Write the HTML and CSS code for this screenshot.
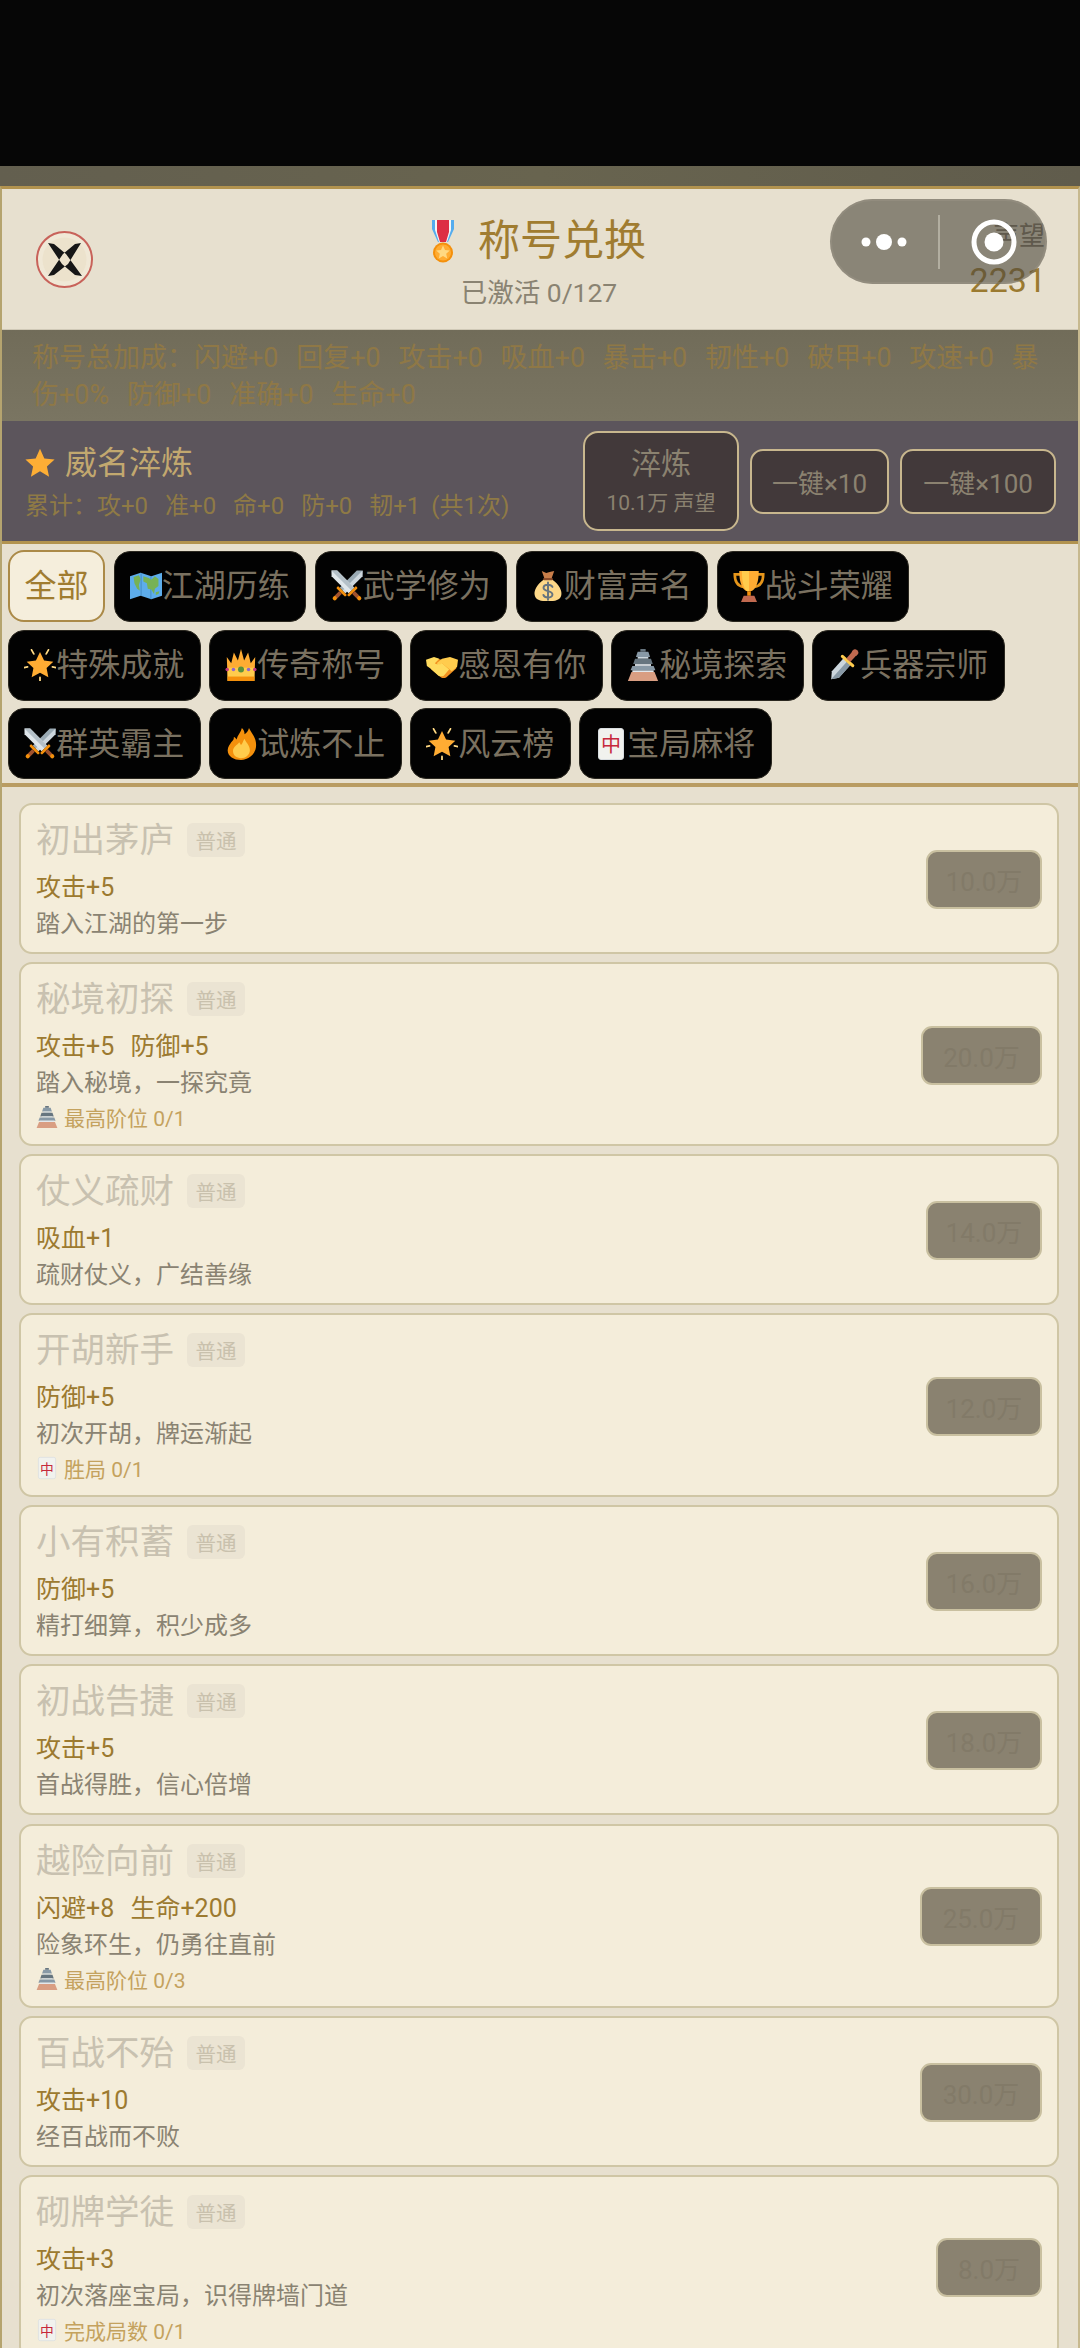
FILE: index.html
```html
<!DOCTYPE html>
<html lang="zh-CN">
<head>
<meta charset="utf-8">
<title>称号兑换</title>
<link rel="stylesheet" href="styles.css">
</head>
<body>
<svg class="defs" width="0" height="0" aria-hidden="true">
  <symbol id="e-star" viewBox="0 0 36 36"><path fill="#fdae35" d="M18 1l5.200 11.600 12.300 1.300-9.200 8.300 2.600 12.300L18 28l-10.900 6.500 2.600-12.300L.5 13.900l12.300-1.300z"/></symbol>
  <symbol id="e-map" viewBox="0 0 36 36"><path fill="#5dadec" d="M0 7l12-4 12 4 12-4v26l-12 4-12-4-12 4z"/><path fill="#4289c1" d="M12 3l1 .3v26.200l-1-.5zM24 7l-1-.3v26.200l1-.4z"/><path fill="#77b255" d="M4 8l6-2 2 4-2 7 1 6-3-2-3-6zM15 7l6 2 3 2 4-4 4 3v8l-4 3-1 6-3-5-4-1-1-6-4-2zM29 25l4-1-1 3-3 1z"/></symbol>
  <symbol id="e-swords" viewBox="0 0 36 36"><g transform="rotate(45 18 18) translate(18 18) scale(1.180) translate(-18 -18)"><path fill="#9aaab4" d="M18-3l3.800 4V24h-7.600V1z"/><path fill="#ccd6dd" d="M18-3l3.800 4V24H18z"/><rect x="12" y="24" width="12" height="2.600" rx="1" fill="#f4900c"/><rect x="16.200" y="26.600" width="3.600" height="7" fill="#a0522d"/><circle cx="18" cy="34.500" r="2" fill="#f4900c"/></g><g transform="rotate(-45 18 18) translate(18 18) scale(1.180) translate(-18 -18)"><path fill="#dfe6ea" d="M18-3l3.800 4V24h-7.600V1z"/><path fill="#b4c0c8" d="M18-3l3.800 4V24H18z"/><rect x="12" y="24" width="12" height="2.600" rx="1" fill="#f4900c"/><rect x="16.200" y="26.600" width="3.600" height="7" fill="#a0522d"/><circle cx="18" cy="34.500" r="2" fill="#f4900c"/></g></symbol>
  <symbol id="e-bag" viewBox="0 0 36 36"><path fill="#fdd888" d="M13 11C6 16 2 23 3 28c1 6 7 7 15 7s14-1 15-7c1-5-3-12-10-17z"/><path fill="#c97e4a" d="M11 1l5 2.500L21 2l4-1-3 8.500h-8z"/><rect x="12.500" y="9" width="11" height="2.600" rx="1.300" fill="#8a4b2a"/><path fill="none" stroke="#67757f" stroke-width="2.200" stroke-linecap="round" d="M23 19c-1-2-3-2.500-5-2.500-3 0-5 1.500-5 3.500 0 5 10 2.500 10 7.500 0 2-2.300 3.500-5 3.500-2.500 0-4.500-1-5.200-3M18 14v19.500"/></symbol>
  <symbol id="e-trophy" viewBox="0 0 36 36"><path fill="none" stroke="#e5951a" stroke-width="3" d="M9 5H2c0 8 3 13 10 14M27 5h7c0 8-3 13-10 14"/><path fill="#ffac33" d="M7 1h22c0 12-3 21-9 23h-4C10 22 7 13 7 1z"/><path fill="#ffcc4d" d="M10 1h8v23h-2C12 21 10 13 10 1z"/><path fill="#f4900c" d="M16 24h4v5h-4z"/><path fill="#c1694f" d="M12 29h12l3 7H9z"/></symbol>
  <symbol id="e-burst" viewBox="0 0 36 36"><path fill="#ffac33" d="M18 3.500l4.600 9.400 10.400 1.400-7.600 7.100 2 10.300L18 26.600l-9.400 5.100 2-10.300L3 14.300l10.400-1.400z"/><path fill="none" stroke="#ffd983" stroke-width="2" stroke-linecap="round" d="M8.500 1l2.500 4.500M27.500 1L25 5.500M0 21l4-.8M36 21l-4-.8M18 32v4"/></symbol>
  <symbol id="e-crown" viewBox="0 0 36 36"><path fill="#ffac33" d="M2 9l5 7 3-12 4.500 9L18 0l3.500 13L26 4l3 12 5-7-1 27H3z"/><path fill="#ffcc4d" d="M3 21h30v15H3z"/><rect x="3" y="31" width="30" height="5" fill="#f4900c"/><circle cx="18" cy="23" r="3.400" fill="#5c913b"/><circle cx="9.500" cy="23" r="2" fill="#9266cc"/><circle cx="26.500" cy="23" r="2" fill="#9266cc"/><circle cx="2.500" cy="23" r="2" fill="#c2397f"/><circle cx="33.500" cy="23" r="2" fill="#c2397f"/></symbol>
  <symbol id="e-shake" viewBox="0 0 36 36"><path fill="#f19020" d="M1 13l8-3 9 2 9-2 8 3-1 9-10 9c-2 2-5 2-7 1L6 23z"/><path fill="#ffdb5e" d="M0 12l9-3 6 2-5 5c2 2 5 1 7-1l9 8-6 7c-2 1-4 1-6 0L5 22 1 19z"/><path fill="#ffcc4d" d="M36 12l-9-3-9 2-6 5c2 2 4 2 6 0l11 9 6-5z"/></symbol>
  <symbol id="e-castle" viewBox="0 0 36 36"><path fill="#67757f" d="M15 0h6v3h-6z"/><path fill="#8899a6" d="M12 3h12l2 6H10z"/><path fill="#ccd6dd" d="M12 9h12v2H12z"/><path fill="#66757f" d="M9 11h18l2 6H7z"/><path fill="#e1e8ed" d="M9 17h18v2H9z"/><path fill="#8899a6" d="M6 19h24l2 5H4z"/><path fill="#e1e8ed" d="M6 24h24v2H6z"/><path fill="#d99e82" d="M5 26h26l4 10H1z"/></symbol>
  <symbol id="e-dagger" viewBox="0 0 36 36"><g transform="rotate(42 18 18) translate(18 18) scale(1.200) translate(-18 -18)"><path fill="#ccd6dd" d="M18 36l-4.500-6V14h9v16z"/><path fill="#8899a6" d="M18 36l4.500-6V14H18z"/><rect x="10" y="11.500" width="16" height="3" rx="1.500" fill="#ffcc4d"/><rect x="15.500" y="3" width="5" height="9" fill="#c1694f"/><circle cx="18" cy="2.500" r="3" fill="#c1694f"/></g></symbol>
  <symbol id="e-fire" viewBox="0 0 36 36"><path fill="#f4900c" d="M35 19C35 10 29 5 27 0c-1 4-3 6-5 7 0-3-1-5-3-7-1 5-5 8-6 13-1-2-2-3-3-3 0 3-1 4-3 6-1 2-4 5-4 9 0 7 7 11 15 11s17-6 17-17z"/><path fill="#ffcc4d" d="M28 25c0-6-5-9-6-13-2 3-2 5-4 7-1-1-1-2-2-3-2 3-7 5-7 10 0 5 4 8 9 8s10-4 10-9z"/></symbol>
</svg>

<div class="top-black"></div>
<div class="top-band"></div>

<main class="panel">
  <header class="head">
    <div class="head-left">
      <svg class="close" viewBox="0 0 57 57" aria-label="关闭"><circle cx="28.500" cy="28.500" r="27.500" fill="#f0e8d6" stroke="#c8625a" stroke-width="2"/><circle cx="28.500" cy="28.500" r="22" fill="#ece2cc"/><path fill="#161616" d="M12 12l6 1 12 10 16 22-7-1-13-11zM45 12l-6 1-12 10-15 22 6-1 14-11z"/></svg>
    </div>
    <div class="head-mid">
      <h1 class="title">
        <svg class="medal" viewBox="0 0 22 43"><path fill="#55acee" d="M0 0h22v9l-6 13H6L0 9z"/><path fill="#f5f5f5" d="M3 0h16v10l-4 12H7L3 10z"/><path fill="#dd2e44" d="M5 0h12v12l-3 10H8L5 12z"/><circle cx="11" cy="32.500" r="10" fill="#f4900c"/><circle cx="11" cy="32.500" r="8" fill="#ffac33"/><path fill="#ffd983" d="M11 25.500l2 4.500 4.800.5-3.600 3.200 1 4.800-4.200-2.500-4.200 2.500 1-4.800-3.600-3.200 4.800-.5z"/></svg>
        <span>称号兑换</span>
      </h1>
      <p class="sub">已激活 0/127</p>
    </div>
    <div class="head-right">
      <span class="rep-label">声望</span>
      <span class="rep-value">2231</span>
    </div>
  </header>

  <section class="bonus">称号总加成：闪避+0 回复+0 攻击+0 吸血+0 暴击+0 韧性+0 破甲+0 攻速+0 暴伤+0% 防御+0 准确+0 生命+0</section>

  <section class="temper">
    <div class="temper-info">
      <div class="temper-name"><svg class="temper-star"><use href="#e-star"/></svg><span>威名淬炼</span></div>
      <div class="temper-sum">累计：攻+0 准+0 命+0 防+0 韧+1<span class="temper-count"> (共1次)</span></div>
    </div>
    <div class="temper-actions">
      <div class="tbtn tbtn-main"><span class="tbtn-name">淬炼</span><span class="tbtn-cost">10.1万 声望</span></div>
      <div class="tbtn tbtn-ten">一键×10</div>
      <div class="tbtn tbtn-hundred">一键×100</div>
    </div>
  </section>

  <nav class="tabs">
    <div class="tab tab-on">全部</div>
    <div class="tab"><svg class="tab-ico"><use href="#e-map"/></svg>江湖历练</div>
    <div class="tab"><svg class="tab-ico"><use href="#e-swords"/></svg>武学修为</div>
    <div class="tab"><svg class="tab-ico"><use href="#e-bag"/></svg>财富声名</div>
    <div class="tab"><svg class="tab-ico"><use href="#e-trophy"/></svg>战斗荣耀</div>
    <div class="tab"><svg class="tab-ico"><use href="#e-burst"/></svg>特殊成就</div>
    <div class="tab"><svg class="tab-ico"><use href="#e-crown"/></svg>传奇称号</div>
    <div class="tab"><svg class="tab-ico"><use href="#e-shake"/></svg>感恩有你</div>
    <div class="tab"><svg class="tab-ico"><use href="#e-castle"/></svg>秘境探索</div>
    <div class="tab"><svg class="tab-ico"><use href="#e-dagger"/></svg>兵器宗师</div>
    <div class="tab"><svg class="tab-ico"><use href="#e-swords"/></svg>群英霸主</div>
    <div class="tab"><svg class="tab-ico"><use href="#e-fire"/></svg>试炼不止</div>
    <div class="tab"><svg class="tab-ico"><use href="#e-burst"/></svg>风云榜</div>
    <div class="tab"><svg class="tab-ico" viewBox="0 0 32 32"><rect x="3.500" y=".5" width="25" height="31" rx="2.500" fill="#f1f2ee" stroke="#d8dde0"/><text class="tile-glyph" x="16" y="24" text-anchor="middle">中</text></svg>宝局麻将</div>
  </nav>

  <div class="list">
    <article class="card">
      <div class="card-body">
        <div class="card-head"><span class="card-name">初出茅庐</span><span class="grade">普通</span></div>
        <div class="stat">攻击+5</div>
        <div class="desc">踏入江湖的第一步</div>
      </div>
      <div class="cost">10.0万</div>
    </article>
    <article class="card">
      <div class="card-body">
        <div class="card-head"><span class="card-name">秘境初探</span><span class="grade">普通</span></div>
        <div class="stat">攻击+5 防御+5</div>
        <div class="desc">踏入秘境，一探究竟</div>
        <div class="req"><svg class="req-ico"><use href="#e-castle"/></svg>最高阶位 0/1</div>
      </div>
      <div class="cost cost-mid">20.0万</div>
    </article>
    <article class="card">
      <div class="card-body">
        <div class="card-head"><span class="card-name">仗义疏财</span><span class="grade">普通</span></div>
        <div class="stat">吸血+1</div>
        <div class="desc">疏财仗义，广结善缘</div>
      </div>
      <div class="cost">14.0万</div>
    </article>
    <article class="card">
      <div class="card-body">
        <div class="card-head"><span class="card-name">开胡新手</span><span class="grade">普通</span></div>
        <div class="stat">防御+5</div>
        <div class="desc">初次开胡，牌运渐起</div>
        <div class="req"><svg class="req-ico" viewBox="0 0 32 32"><rect x="3.500" y=".5" width="25" height="31" rx="2.500" fill="#f1f2ee" stroke="#d8dde0"/><text class="tile-glyph" x="16" y="24" text-anchor="middle">中</text></svg>胜局 0/1</div>
      </div>
      <div class="cost">12.0万</div>
    </article>
    <article class="card">
      <div class="card-body">
        <div class="card-head"><span class="card-name">小有积蓄</span><span class="grade">普通</span></div>
        <div class="stat">防御+5</div>
        <div class="desc">精打细算，积少成多</div>
      </div>
      <div class="cost">16.0万</div>
    </article>
    <article class="card">
      <div class="card-body">
        <div class="card-head"><span class="card-name">初战告捷</span><span class="grade">普通</span></div>
        <div class="stat">攻击+5</div>
        <div class="desc">首战得胜，信心倍增</div>
      </div>
      <div class="cost">18.0万</div>
    </article>
    <article class="card">
      <div class="card-body">
        <div class="card-head"><span class="card-name">越险向前</span><span class="grade">普通</span></div>
        <div class="stat">闪避+8 生命+200</div>
        <div class="desc">险象环生，仍勇往直前</div>
        <div class="req"><svg class="req-ico"><use href="#e-castle"/></svg>最高阶位 0/3</div>
      </div>
      <div class="cost cost-wide">25.0万</div>
    </article>
    <article class="card">
      <div class="card-body">
        <div class="card-head"><span class="card-name">百战不殆</span><span class="grade">普通</span></div>
        <div class="stat">攻击+10</div>
        <div class="desc">经百战而不败</div>
      </div>
      <div class="cost cost-wide">30.0万</div>
    </article>
    <article class="card">
      <div class="card-body">
        <div class="card-head"><span class="card-name">砌牌学徒</span><span class="grade">普通</span></div>
        <div class="stat">攻击+3</div>
        <div class="desc">初次落座宝局，识得牌墙门道</div>
        <div class="req"><svg class="req-ico" viewBox="0 0 32 32"><rect x="3.500" y=".5" width="25" height="31" rx="2.500" fill="#f1f2ee" stroke="#d8dde0"/><text class="tile-glyph" x="16" y="24" text-anchor="middle">中</text></svg>完成局数 0/1</div>
      </div>
      <div class="cost cost-narrow">8.0万</div>
    </article>
  </div>
</main>

<div class="capsule">
  <svg class="capsule-dots" viewBox="0 0 48 20"><circle cx="6" cy="10" r="4.500"/><circle cx="24" cy="10" r="8"/><circle cx="42" cy="10" r="4.500"/></svg>
  <span class="capsule-line"></span>
  <svg class="capsule-target" viewBox="0 0 46 46"><circle cx="23" cy="23" r="20" fill="none" stroke="#fff" stroke-width="5"/><circle cx="23" cy="23" r="9.500" fill="#fff"/></svg>
</div>
</body>
</html>
```

FILE: styles.css
```css
* { box-sizing: border-box; }

html, body {
  margin: 0;
  padding: 0;
  width: 1080px;
  height: 2348px;
  overflow: hidden;
  background: #060606;
  font-family: Roboto, "Noto Sans CJK SC", sans-serif;
}

.defs { display: block; height: 0; }
.tile-glyph { font: 20px "Noto Sans CJK SC", sans-serif; fill: #c6283c; }

.top-black { height: 166px; background: #060606; }
.top-band { height: 20px; background: linear-gradient(90deg, #635f4f, #68644f 50%, #605c4c); }

.panel {
  position: relative;
  height: 2162px;
  overflow: hidden;
  background: #e7e0cf;
  border-top: 3px solid #b2934f;
  border-left: 2px solid #b5a46f;
  border-right: 2px solid #c7b98f;
}

/* header */
.head {
  display: grid;
  grid-template-columns: 1fr auto 1fr;
  align-items: center;
  height: 141px;
  border-bottom: 1px solid #cfc8b6;
}
.head-left { padding-left: 34px; display: flex; }
.close { width: 57px; height: 57px; display: block; }
.head-mid { display: flex; flex-direction: column; align-items: center; padding-top: 7px; margin-left: -2px; }
.title {
  margin: 0;
  display: flex;
  align-items: center;
  gap: 24px;
  font-size: 42px;
  line-height: 56px;
  font-weight: 400;
  color: #a07c30;
}
.medal { width: 22px; height: 43px; display: block; }
.sub {
  margin: 5px 0 0;
  font-size: 26.500px;
  line-height: 38px;
  color: #8a8372;
}
.head-right {
  display: flex;
  flex-direction: column;
  align-items: flex-end;
  padding-right: 33px;
}
.rep-label { font-size: 26px; line-height: 36px; color: #7a7365; }
.rep-value { font-size: 34px; line-height: 42px; font-weight: 400; color: #9b7a30; margin-top: 5px; margin-right: -1px; }

/* bonus summary */
.bonus {
  height: 91px;
  padding: 10px 28px 0 30px;
  font-size: 27px;
  line-height: 37px;
  word-spacing: 11px;
  color: #8f7846;
  background: linear-gradient(180deg, #716c59, #7a7562);
}

/* temper */
.temper {
  display: flex;
  align-items: center;
  justify-content: space-between;
  height: 120px;
  padding: 0 22px 0 23px;
  background: #5c555c;
}
.temper-info { padding-top: 5px; }
.temper-name {
  display: flex;
  align-items: center;
  gap: 10px;
  font-size: 32px;
  line-height: 44px;
  color: #c2a86f;
}
.temper-star { width: 30px; height: 30px; display: block; }
.temper-sum {
  margin-top: 1px;
  font-size: 24px;
  line-height: 40px;
  word-spacing: 11px;
  color: #8f7a45;
}
.temper-count { word-spacing: 5px; }
.temper-actions { display: flex; align-items: center; gap: 11px; }
.tbtn {
  display: flex;
  flex-direction: column;
  align-items: center;
  justify-content: center;
  height: 65px;
  border: 2px solid #c8b78e;
  border-radius: 13px;
  background: #42393a;
  color: #8b8270;
  font-size: 26px;
}
.tbtn-main { width: 156px; height: 100px; border-radius: 15px; padding-top: 1px; }
.tbtn-ten { width: 139px; }
.tbtn-hundred { width: 156px; }
.tbtn-name { font-size: 30px; line-height: 40px; }
.tbtn-cost { font-size: 21px; line-height: 32px; margin-top: 3px; }

/* tabs */
.tabs {
  display: flex;
  flex-wrap: wrap;
  align-items: center;
  gap: 7.5px 8.5px;
  padding: 6px 6px 5px;
  height: 246px;
  align-content: flex-start;
  border-top: 3px solid #b2934f;
  border-bottom: 4px solid #b99c62;
}
.tab {
  display: flex;
  align-items: center;
  height: 71px;
  padding: 0 15.250px;
  border-radius: 16px;
  border: 1px solid #2b2820;
  background: #020202;
  color: #7a7160;
  font-size: 32px;
  line-height: 1;
}
.tab-on {
  height: 72px;
  width: 97px;
  justify-content: center;
  padding: 0;
  border: 2px solid #ab8a48;
  background: #f5eedc;
  color: #a07c30;
}
.tab-ico { width: 32px; height: 32px; display: block; flex: none; }

/* list */
.list {
  display: flex;
  flex-direction: column;
  gap: 8.1px;
  padding: 16px 19px 0 17px;
}
.card {
  display: flex;
  align-items: center;
  justify-content: space-between;
  flex: none;
  padding: 12px 15px 10px 15px;
  background: #f4edda;
  border: 2px solid #cfc6a5;
  border-radius: 13px;
}
.card-head { display: flex; align-items: center; gap: 13px; height: 46px; }
.card-name { font-size: 34.500px; line-height: 46px; color: #c8c1b0; }
.grade {
  display: flex;
  align-items: center;
  justify-content: center;
  width: 58px;
  height: 34px;
  border-radius: 6px;
  background: #ebe4d3;
  color: #c9c1ad;
  font-size: 20.500px;
}
.stat {
  margin-top: 6px;
  font-size: 25px;
  line-height: 37px;
  font-weight: 400;
  word-spacing: 10px;
  color: #9c7a30;
}
.desc { font-size: 24px; line-height: 36px; color: #8a8372; }
.req {
  display: flex;
  align-items: center;
  gap: 6px;
  margin-top: 1px;
  margin-bottom: 2px;
  height: 30px;
  font-size: 21px;
  color: #c4a25e;
}
.req-ico { width: 22px; height: 24px; display: block; flex: none; }
.cost {
  display: flex;
  align-items: center;
  justify-content: center;
  flex: none;
  width: 116px;
  height: 59px;
  border: 2px solid #c9c0a0;
  border-radius: 11px;
  background: #8a8270;
  color: #827a68;
  font-size: 26px;
}
.cost-mid { width: 121px; }
.cost-wide { width: 122px; }
.cost-narrow { width: 106px; }

/* host app capsule, floats above the page */
.capsule {
  position: absolute;
  left: 830px;
  top: 199px;
  width: 217px;
  height: 85px;
  border-radius: 43px;
  background: rgba(76, 72, 60, .6);
  box-shadow: inset 0 0 0 2px rgba(160, 156, 140, .35);
  display: flex;
  align-items: center;
}
.capsule-dots { width: 48px; height: 20px; margin-left: 30px; fill: #fff; display: block; }
.capsule-line { width: 2px; height: 54px; margin-left: 30px; background: #b2aea0; }
.capsule-target { width: 46px; height: 46px; margin-left: 31px; display: block; }
```
